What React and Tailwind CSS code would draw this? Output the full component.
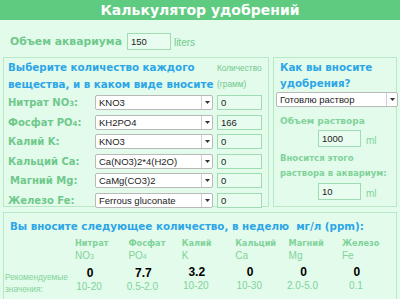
import React from "react";

const V = { fontFamily: '"DejaVu Sans", Verdana, sans-serif' };
const A = { fontFamily: '"Liberation Sans", Arial, sans-serif' };

function Select({ value, className }) {
  return (
    <div className={"flex h-[15px] items-stretch rounded-[2px] border border-[#b9b9b9] bg-white " + className}>
      <div className="flex-1 overflow-hidden whitespace-nowrap pl-[3px] text-[9.5px] leading-[13px] text-[#222]" style={A}>
        {value}
      </div>
      <div className="flex w-[11px] items-center justify-center border-l border-[#d0d0d0]">
        <svg width="5" height="3" viewBox="0 0 5 3"><path d="M0 0h5L2.5 3z" fill="#333" /></svg>
      </div>
    </div>
  );
}

function Input({ value, className }) {
  return (
    <div className={"border border-[#9fdcb1] bg-[#e8fcef] pl-[3px] text-[9.5px] text-[#222] " + className} style={A}>
      {value}
    </div>
  );
}

const rows = [
  ["Нитрат NO", "3", "KNO3", "0", "pl-0"],
  ["Фосфат PO", "4", "KH2PO4", "166", "pl-0"],
  ["Калий K:", "", "KNO3", "0", "pl-0"],
  ["Кальций Ca:", "", "Ca(NO3)2*4(H2O)", "0", "pl-0"],
  ["Магний Mg:", "", "CaMg(CO3)2", "0", "pl-[2px]"],
  ["Железо Fe:", "", "Ferrous gluconate", "0", "pl-0"],
];

const cols = [
  ["Нитрат", "NO", "3", "0", "10-20"],
  ["Фосфат", "PO", "4", "7.7", "0.5-2.0"],
  ["Калий", "K", "", "3.2", "10-20"],
  ["Кальций", "Ca", "", "0", "10-30"],
  ["Магний", "Mg", "", "0", "2.0-5.0"],
  ["Железо", "Fe", "", "0", "0.1"],
];

export default function App() {
  return (
    <div className="h-[299px] w-[400px] overflow-hidden bg-[#e3fbeb]" style={V}>
      <div className="flex h-[20px] items-center justify-center bg-[#5fcb80] text-[14px] font-bold text-white">
        Калькулятор удобрений
      </div>

      <div className="flex h-[37px] items-start pl-[10px] pt-[13px]">
        <span className="mt-[1px] text-[10.8px] font-bold leading-[16px] text-[#6fc98b]">Объем аквариума</span>
        <Input value="150" className="ml-[5px] h-[17px] w-[44px] leading-[15px]" />
        <span className="ml-[3px] mt-[3px] text-[10px] leading-[14px] text-[#6fc98b]" style={A}>liters</span>
      </div>

      <div className="flex gap-[4px] px-[3px]">
        <div className="h-[150px] w-[266px] border border-[#b7e9c6] pl-[4px]">
          <div className="flex">
            <div className="w-[209px] whitespace-nowrap pt-[1px] text-[10.3px] font-bold leading-[17px] text-[#2ba6e8]">
              Выберите количество каждого
              <br />
              вещества, и в каком виде вносите
            </div>
            <div className="whitespace-nowrap pt-[2px] text-[8.3px] leading-[16px] text-[#6fc98b]" style={A}>
              Количество
              <br />
              (грамм)
            </div>
          </div>
          <div className="flex flex-col">
            {rows.map(([l, sub, sel, val, pl]) => (
              <div key={l + sel} className="flex h-[19.5px] items-center">
                <div className={"w-[87px] whitespace-nowrap text-[10px] font-bold text-[#6fc98b] " + pl}>
                  {l}
                  {sub && (
                    <>
                      <span className="text-[7px]">{sub}</span>:
                    </>
                  )}
                </div>
                <Select value={sel} className="w-[118px]" />
                <Input value={val} className="ml-[4px] h-[15px] w-[45px] leading-[13px]" />
              </div>
            ))}
          </div>
        </div>

        <div className="h-[150px] w-[124px] border border-[#b7e9c6] pl-[2px]">
          <div className="whitespace-nowrap pl-[4px] pt-[1px] text-[10.3px] font-bold leading-[16px] text-[#2ba6e8]">
            Как вы вносите
            <br />
            удобрения?
          </div>
          <Select value="Готовлю раствор" className="mt-[1px] w-[122px]" />
          <div className="whitespace-nowrap pl-[4px] pt-[6px] text-[9px] font-bold leading-[16px] text-[#7fd39a]">Объем раствора</div>
          <div className="flex items-end pl-[42px] pt-[1px]">
            <Input value="1000" className="h-[17px] w-[43px] leading-[15px]" />
            <span className="ml-[5px] text-[10px] leading-[12px] text-[#7fd39a]" style={A}>ml</span>
          </div>
          <div className="whitespace-nowrap pl-[4px] pt-[4px] text-[8.5px] font-bold leading-[15px] text-[#7fd39a]">
            Вносится этого
            <br />
            раствора в аквариум:
          </div>
          <div className="flex items-end pl-[42px] pt-[2px]">
            <Input value="10" className="h-[17px] w-[43px] leading-[15px]" />
            <span className="ml-[5px] text-[10px] leading-[12px] text-[#7fd39a]" style={A}>ml</span>
          </div>
        </div>
      </div>

      <div className="mx-[3px] mt-[5px] h-[100px] border border-[#b7e9c6] pt-[5px]">
        <div className="whitespace-nowrap pl-[6px] text-[10.3px] font-bold leading-[16px] text-[#2ba6e8]">
          Вы вносите следующее количество, в неделю&nbsp; мг/л (ppm):
        </div>
        <div className="flex pt-[3px]">
          <div className="w-[68px] whitespace-nowrap pl-[1px] pt-[34px] text-[8.3px] leading-[12px] text-[#7fd39a]" style={A}>
            Рекомендуемые
            <br />
            значения:
          </div>
          {cols.map(([h, s, sub, v, r]) => (
            <div key={h} className="flex w-[53.4px] flex-col">
              <div className="pl-[3px] text-[8.2px] font-bold leading-[13px] text-[#7fd39a]">{h}</div>
              <div className="pl-[3px] text-[10px] leading-[12px] text-[#7fd39a]" style={A}>
                {s}
                {sub && <span className="text-[7px]">{sub}</span>}
              </div>
              <div className="mt-[3px] w-[36px] text-center text-[12px] font-bold leading-[14px] text-black" style={A}>
                {v}
              </div>
              <div className="w-[34px] text-center text-[10px] leading-[14px] text-[#7fd39a]" style={A}>
                {r}
              </div>
            </div>
          ))}
        </div>
      </div>
    </div>
  );
}
